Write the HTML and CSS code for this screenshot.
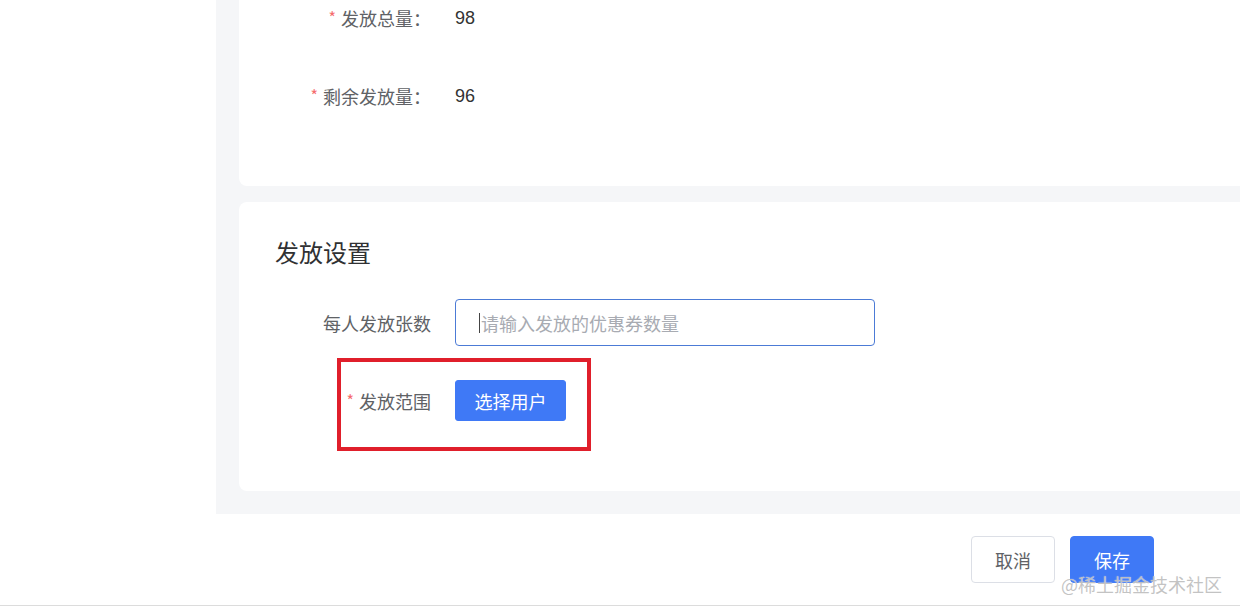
FILE: index.html
```html
<!DOCTYPE html>
<html lang="zh-CN">
<head>
<meta charset="utf-8">
<title>发放设置</title>
<link rel="stylesheet" href="styles.css">
</head>
<body>
<div class="page">
  <div class="main">
    <section class="card card-top">
      <div class="row info-row">
        <div class="label"><span class="req">*</span>发放总量：</div>
        <div class="value">98</div>
      </div>
      <div class="row info-row">
        <div class="label"><span class="req">*</span>剩余发放量：</div>
        <div class="value">96</div>
      </div>
    </section>
    <section class="card card-settings">
      <h2 class="title">发放设置</h2>
      <div class="row input-row">
        <div class="label">每人发放张数</div>
        <div class="input"><span class="caret"></span><span class="placeholder">请输入发放的优惠券数量</span></div>
      </div>
      <div class="row btn-row">
        <div class="label"><span class="req">*</span>发放范围</div>
        <button class="btn btn-primary btn-select">选择用户</button>
        <div class="highlight"></div>
      </div>
    </section>
  </div>
  <footer class="footer">
    <button class="btn btn-default">取消</button>
    <button class="btn btn-primary">保存</button>
    <div class="watermark">@稀土掘金技术社区</div>
  </footer>
  <div class="bottom-line"></div>
</div>
</body>
</html>
```
FILE: styles.css
```css
* { box-sizing: border-box; }
html, body {
  margin: 0;
  padding: 0;
  background: #ffffff;
  width: 1240px;
  height: 613px;
  overflow: hidden;
  font-family: "Noto Sans CJK SC", "Noto Sans", sans-serif;
}
.page {
  position: relative;
  display: flex;
  flex-direction: column;
  width: 1240px;
  height: 613px;
}
.main {
  margin-left: 216px;
  background: #f5f6f8;
  padding: 0 0 23px 23px;
  display: flex;
  flex-direction: column;
  gap: 16px;
}
.card {
  background: #ffffff;
  border-radius: 8px 0 0 8px;
}
.card-top {
  height: 186px;
  border-top-left-radius: 0;
  display: flex;
  flex-direction: column;
  gap: 42px;
}
.row {
  display: flex;
  align-items: center;
}
.label {
  width: 192px;
  text-align: right;
  font-size: 18px;
  color: #606266;
  flex-shrink: 0;
}
.req {
  color: #f56c6c;
  font-size: 16px;
  margin-right: 5px;
  position: relative;
  top: -2px;
}
.info-row {
  height: 36px;
}
.info-row .value {
  margin-left: 24px;
  font-size: 18px;
  color: #333333;
  font-family: "Liberation Sans", Arial, sans-serif;
}
.card-settings {
  height: 289px;
  padding-top: 34px;
}
.title {
  margin: 0 0 0 36px;
  font-size: 24px;
  font-weight: 400;
  line-height: 32px;
  color: #303133;
}
.input-row {
  margin-top: 31px;
}
.input {
  margin-left: 24px;
  width: 420px;
  height: 47px;
  border: 1px solid #4c7bd6;
  border-radius: 4px;
  display: flex;
  align-items: center;
  padding-left: 23px;
}
.caret {
  width: 1px;
  height: 20px;
  background: #444;
  margin-right: 1px;
}
.placeholder {
  font-size: 18px;
  color: #a8abb2;
}
.btn-row {
  margin-top: 34px;
  position: relative;
}
.btn {
  font-family: "Noto Sans CJK SC", "Noto Sans", sans-serif;
  font-size: 18px;
  border-radius: 4px;
  cursor: pointer;
  padding: 0;
}
.btn-primary {
  background: #3f79f6;
  color: #ffffff;
  border: 1px solid #3f79f6;
}
.btn-select {
  margin-left: 24px;
  width: 111px;
  height: 41px;
  border-radius: 3px;
}
.highlight {
  position: absolute;
  left: 98px;
  top: -22px;
  width: 254px;
  height: 93px;
  border: 4px solid #e01f2b;
  pointer-events: none;
}
.footer {
  position: relative;
  display: flex;
  justify-content: flex-end;
  gap: 15px;
  padding: 22px 86px 22px 0;
}
.footer .btn {
  width: 84px;
  height: 47px;
}
.btn-default {
  background: #ffffff;
  color: #606266;
  border: 1px solid #dcdfe6;
}
.watermark {
  position: absolute;
  right: 18px;
  top: 57px;
  font-size: 18px;
  color: rgba(185, 185, 185, 0.85);
  text-shadow: 0 0 1px rgba(255, 255, 255, 0.9);
  white-space: nowrap;
}
.bottom-line {
  height: 1px;
  background: #dcdcdc;
}
```
